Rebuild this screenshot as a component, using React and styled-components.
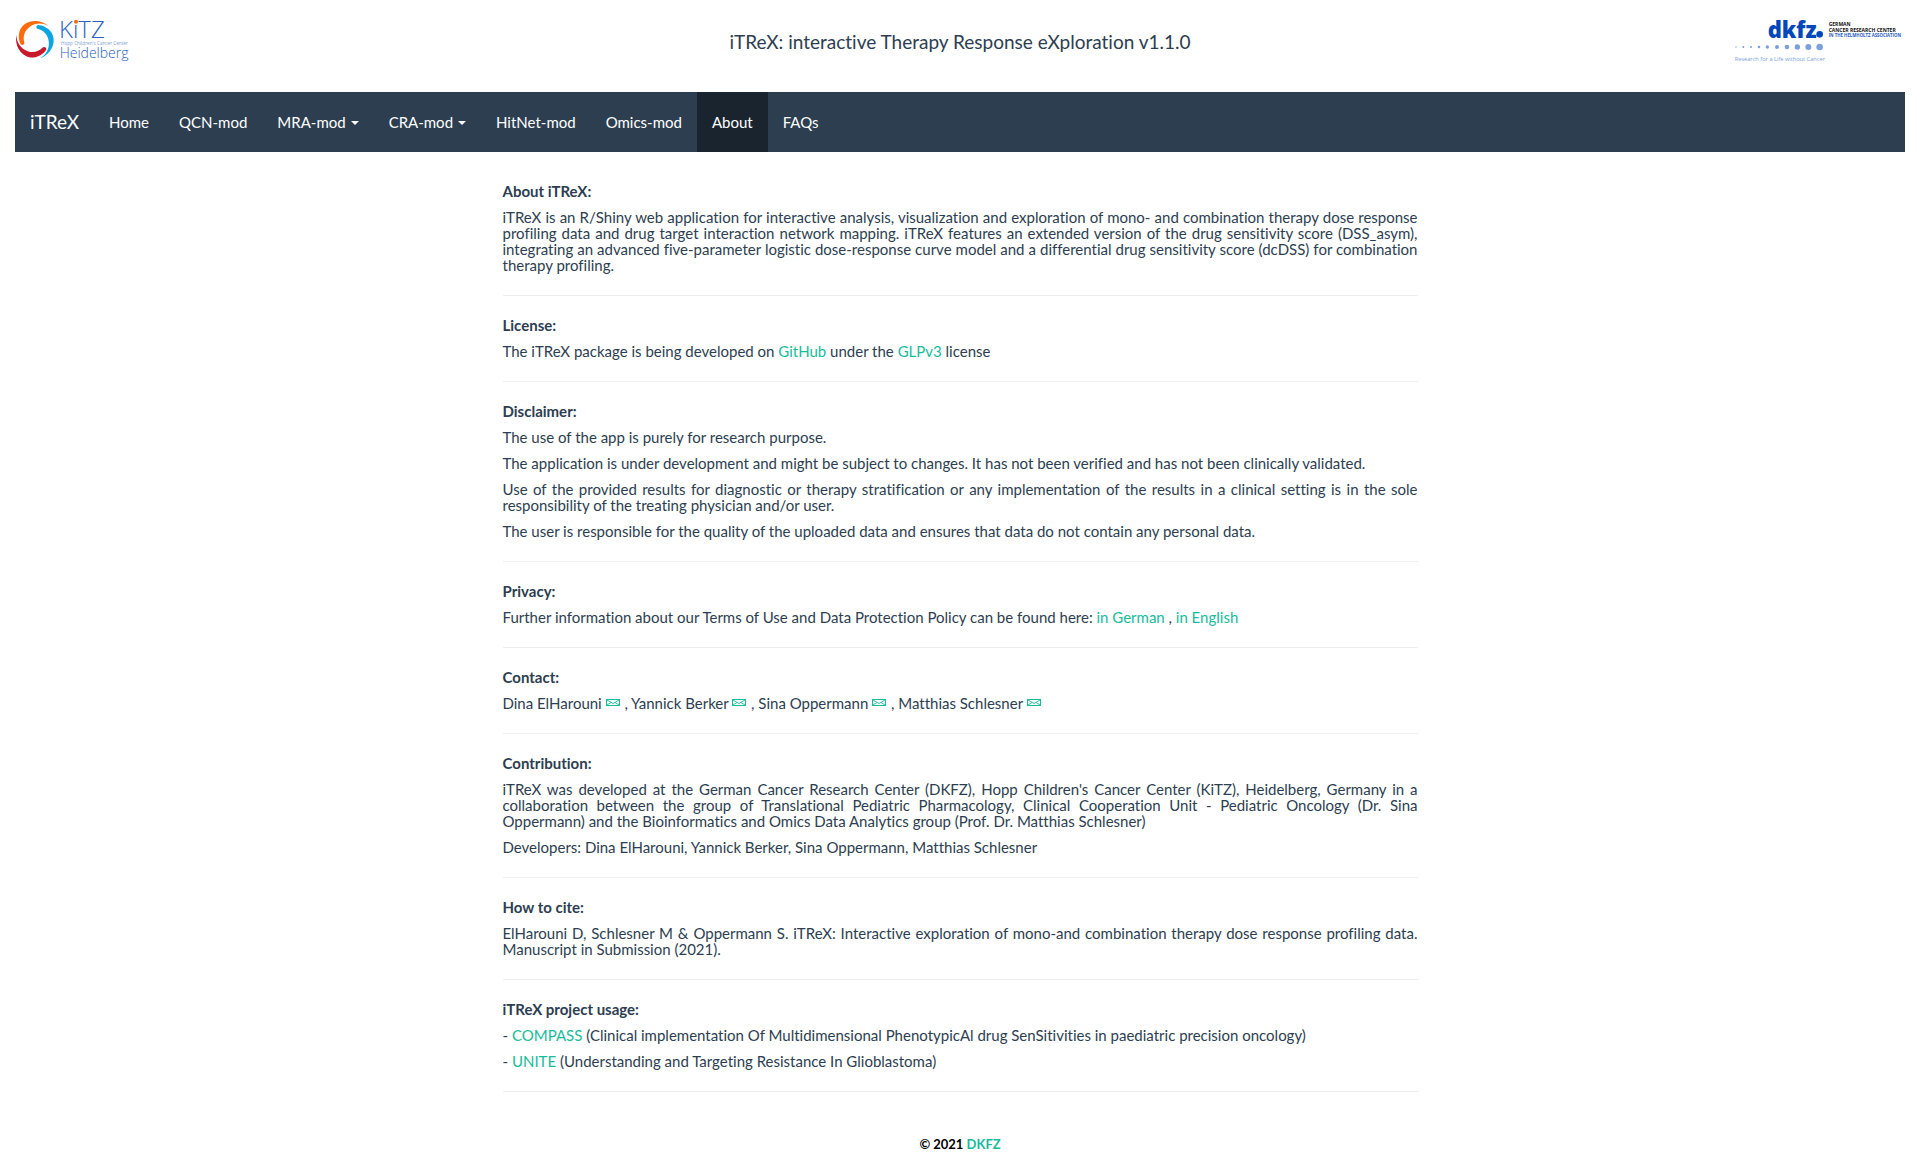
import React from "react";
import styled, { createGlobalStyle } from "styled-components";

const GlobalStyle = createGlobalStyle`
  *, *::before, *::after { box-sizing: border-box; }
  body {
    margin: 0;
    background: #fff;
    color: #2c3e50;
    font-family: Lato, "Liberation Sans", sans-serif;
    font-size: 15px;
    font-variant-ligatures: no-common-ligatures;
    line-height: 21px;
  }
`;

const Page = styled.div`
  padding: 0 15px;
`;

const Header = styled.header`
  display: grid;
  grid-template-columns: 1fr auto 1fr;
  align-items: start;
  padding-bottom: 12px;
`;

const LogoSlot = styled.div`
  display: flex;
  justify-content: ${(p) => (p.$end ? "flex-end" : "flex-start")};
`;

const Logo = styled.svg`
  display: block;
  flex: none;
  overflow: visible;
  font-family: "Open Sans", "Noto Sans", sans-serif;
`;

const Title = styled.h1`
  margin: 31px 0 0;
  font-size: 19px;
  font-weight: 400;
  line-height: 21px;
  text-align: center;
`;

const Navbar = styled.nav`
  display: flex;
  background: #2c3e50;
`;

const Brand = styled.a`
  padding: 19px 15px;
  font-size: 19px;
  line-height: 21px;
  color: #fff;
  text-decoration: none;
`;

const NavList = styled.ul`
  display: flex;
  margin: 0;
  padding: 0;
  list-style: none;
`;

const NavLink = styled.a`
  display: flex;
  align-items: center;
  gap: 5px;
  height: 60px;
  padding: 0 15px;
  color: #fff;
  text-decoration: none;
  background: ${(p) => (p.$active ? "#1a242f" : "transparent")};
`;

const Caret = styled.span`
  margin-top: 2px;
  border-top: 4px solid;
  border-right: 4px solid transparent;
  border-left: 4px solid transparent;
`;

const Main = styled.main`
  width: 50%;
  margin: 0 auto;
  padding: 31px 15px 0;
  line-height: 16px;
  text-align: justify;
`;

const Section = styled.section`
  margin-bottom: 21px;
  padding-bottom: 22px;
  border-bottom: 1px solid #eee;
`;

const Heading = styled.h2`
  margin: 0 0 10px;
  font-size: 15px;
  font-weight: 700;
  line-height: 16px;
`;

const Text = styled.p`
  margin: 0;
  & + & { margin-top: 10px; }
`;

const Link = styled.a`
  color: #18bc9c;
  text-decoration: none;
`;

const MailIcon = styled.svg`
  display: inline-block;
  vertical-align: baseline;
  margin-right: 1px;
`;

const Footer = styled.footer`
  padding: 21px 0 8px;
  color: #000;
  font-size: 13px;
  font-weight: 700;
  line-height: 21px;
  text-align: center;
`;

const navItems = [
  { label: "Home" },
  { label: "QCN-mod" },
  { label: "MRA-mod", menu: true },
  { label: "CRA-mod", menu: true },
  { label: "HitNet-mod" },
  { label: "Omics-mod" },
  { label: "About", active: true },
  { label: "FAQs" },
];

const contacts = ["Dina ElHarouni", "Yannick Berker", "Sina Oppermann", "Matthias Schlesner"];

const swoosh =
  "M145 78 C120 55 76 58 61 88 C54 104 56 122 62 133 C67 138 74 134 73 127 C68 111 73 94 86 83 C103 68 127 67 145 78 Z";

function KitzLogo() {
  return (
    <Logo width="120" height="80" viewBox="45 0 360 240" role="img" aria-label="KiTZ Heidelberg">
      <path d={swoosh} fill="#ff6a0a" />
      <path d={swoosh} fill="#0aa5e2" transform="rotate(120 105 119)" />
      <path d={swoosh} fill="#c8182c" transform="rotate(240 105 119)" />
      <g fill="#2b62c0">
        <text x="177" y="113" fontSize="72" fontWeight="300">KiTZ</text>
        <text x="183" y="135" fontSize="14" fill="#7d9fd8">Hopp Children's Cancer Center</text>
        <text x="179" y="175" fontSize="42" fontWeight="300">Heidelberg</text>
      </g>
      <circle cx="228" cy="65" r="6" fill="#ff6a0a" />
    </Logo>
  );
}

const dots = [
  [78, 2], [100, 3], [123, 3], [147, 4], [172, 5],
  [201, 6], [231, 7], [262, 8], [295, 9], [329, 10],
];

function DkfzLogo() {
  return (
    <Logo width="170" height="80" viewBox="75 0 510 240" role="img" aria-label="dkfz. German Cancer Research Center">
      <text x="173" y="113" fontSize="66" fontWeight="800" fill="#0047b9">dkfz</text>
      <circle cx="329" cy="103" r="10" fill="#0047b9" />
      {dots.map(([x, r]) => (
        <circle key={x} cx={x} cy="141" r={r} fill="#7ba0dc" />
      ))}
      <g fontSize="15" fontWeight="700">
        <text x="356" y="77" fill="#111">GERMAN</text>
        <text x="356" y="95" fill="#111">CANCER RESEARCH CENTER</text>
        <text x="356" y="112" fontSize="13" fill="#1f5bc0">IN THE HELMHOLTZ ASSOCIATION</text>
      </g>
      <text x="74" y="182" fontSize="17" fill="#7ba0dc">Research for a Life without Cancer</text>
    </Logo>
  );
}

function Mail() {
  return (
    <MailIcon width="14" height="10" viewBox="0 0 14 10" fill="none" stroke="#18bc9c" aria-hidden="true">
      <rect x="0.5" y="0.5" width="13" height="6" />
      <path d="M1 1 L7 4.5 L13 1 M1 6 L5 3.5 M13 6 L9 3.5" strokeWidth="0.9" />
    </MailIcon>
  );
}

export default function App() {
  return (
    <>
      <GlobalStyle />
      <Page>
        <Header>
          <LogoSlot><KitzLogo /></LogoSlot>
          <Title>iTReX: interactive Therapy Response eXploration v1.1.0</Title>
          <LogoSlot $end><DkfzLogo /></LogoSlot>
        </Header>
        <Navbar>
          <Brand href="#home">iTReX</Brand>
          <NavList>
            {navItems.map(({ label, menu, active }) => (
              <li key={label}>
                <NavLink href={`#${label}`} $active={active} aria-current={active ? "page" : undefined}>
                  {label}
                  {menu && <Caret />}
                </NavLink>
              </li>
            ))}
          </NavList>
        </Navbar>
        <Main>
          <Section>
            <Heading>About iTReX:</Heading>
            <Text>
              iTReX is an R/Shiny web application for interactive analysis, visualization and exploration of mono- and
              combination therapy dose response profiling data and drug target interaction network mapping. iTReX
              features an extended version of the drug sensitivity score (DSS_asym), integrating an advanced
              five-parameter logistic dose-response curve model and a differential drug sensitivity score (dcDSS) for
              combination therapy profiling.
            </Text>
          </Section>
          <Section>
            <Heading>License:</Heading>
            <Text>
              The iTReX package is being developed on <Link href="#github">GitHub</Link> under the{" "}
              <Link href="#license">GLPv3</Link> license
            </Text>
          </Section>
          <Section>
            <Heading>Disclaimer:</Heading>
            <Text>The use of the app is purely for research purpose.</Text>
            <Text>
              The application is under development and might be subject to changes. It has not been verified and has not
              been clinically validated.
            </Text>
            <Text>
              Use of the provided results for diagnostic or therapy stratification or any implementation of the results
              in a clinical setting is in the sole responsibility of the treating physician and/or user.
            </Text>
            <Text>
              The user is responsible for the quality of the uploaded data and ensures that data do not contain any
              personal data.
            </Text>
          </Section>
          <Section>
            <Heading>Privacy:</Heading>
            <Text>
              Further information about our Terms of Use and Data Protection Policy can be found here:{" "}
              <Link href="#german">in German</Link> , <Link href="#english">in English</Link>
            </Text>
          </Section>
          <Section>
            <Heading>Contact:</Heading>
            <Text>
              {contacts.map((name, i) => (
                <React.Fragment key={name}>
                  {i > 0 && " , "}
                  {name}{" "}
                  <Link href="#mail" aria-label={`Email ${name}`}><Mail /></Link>
                </React.Fragment>
              ))}
            </Text>
          </Section>
          <Section>
            <Heading>Contribution:</Heading>
            <Text>
              iTReX was developed at the German Cancer Research Center (DKFZ), Hopp Children's Cancer Center (KiTZ),
              Heidelberg, Germany in a collaboration between the group of Translational Pediatric Pharmacology, Clinical
              Cooperation Unit - Pediatric Oncology (Dr. Sina Oppermann) and the Bioinformatics and Omics Data Analytics
              group (Prof. Dr. Matthias Schlesner)
            </Text>
            <Text>Developers: Dina ElHarouni, Yannick Berker, Sina Oppermann, Matthias Schlesner</Text>
          </Section>
          <Section>
            <Heading>How to cite:</Heading>
            <Text>
              ElHarouni D, Schlesner M &amp; Oppermann S. iTReX: Interactive exploration of mono-and combination therapy
              dose response profiling data. Manuscript in Submission (2021).
            </Text>
          </Section>
          <Section>
            <Heading>iTReX project usage:</Heading>
            <Text>
              - <Link href="#compass">COMPASS</Link> (Clinical implementation Of Multidimensional PhenotypicAl drug
              SenSitivities in paediatric precision oncology)
            </Text>
            <Text>
              - <Link href="#unite">UNITE</Link> (Understanding and Targeting Resistance In Glioblastoma)
            </Text>
          </Section>
        </Main>
        <Footer>
          © 2021 <Link href="#dkfz">DKFZ</Link>
        </Footer>
      </Page>
    </>
  );
}
